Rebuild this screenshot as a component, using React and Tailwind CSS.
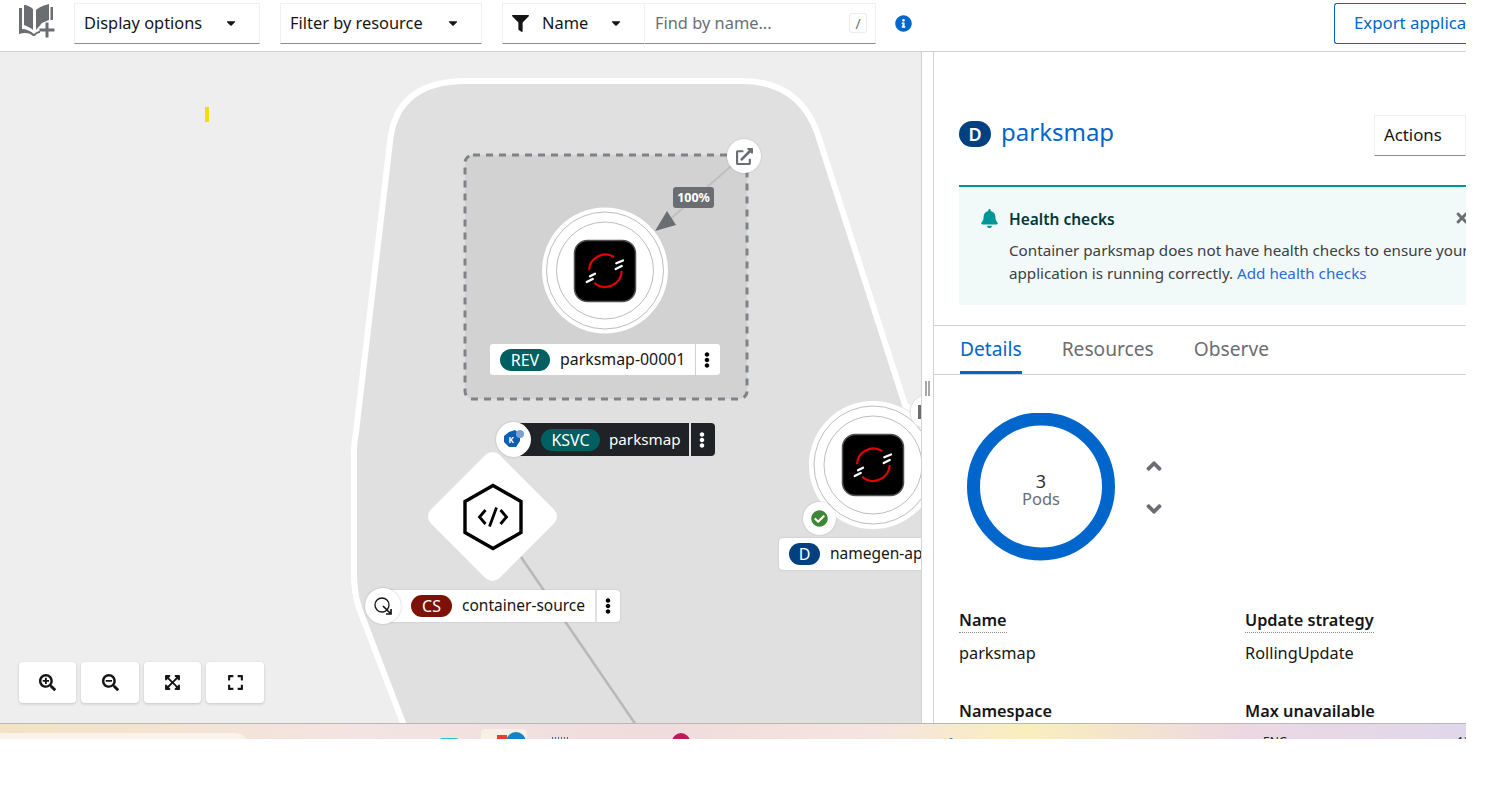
import React from "react";
import {
  FaCaretDown, FaFilter, FaInfoCircle, FaSearchPlus, FaSearchMinus, FaExpandArrowsAlt, FaExpand,
  FaExternalLinkAlt, FaEllipsisV, FaBell, FaTimes, FaAngleUp, FaAngleDown, FaCheckCircle,
} from "react-icons/fa";

function Select({ label, className }) {
  return (
    <div className={"flex h-[41px] items-center justify-between border border-[#f0f0f0] border-b-[#8a8d90] pl-[9px] pr-[21px] text-[16.4px] text-[#151515] " + className}>
      <span>{label}</span>
      <FaCaretDown className="h-[14px] w-[14px] text-[#151515]" />
    </div>
  );
}

function BookIcon() {
  return (
    <svg width="46" height="40" viewBox="14 3 46 40" className="ml-[14px] mr-[14px] shrink-0">
      <path d="M24 5 C27 5 31 7 33 9 V30 C31 28 27 26 24 25 Z" fill="#6a6e73" />
      <path d="M36 10 C39 7 45 5 49 4 V20 L42 23 L36 30 Z" fill="#6a6e73" />
      <path d="M19 8 H22 V29 C26 29 31 31 34 34 C36 32 38 31 40 31 V33 C38 33 36 34 35 36 H33 C30 33 25 32 19 34 Z" fill="#6a6e73" />
      <path d="M50.5 7 H53 V20 H50.5 Z" fill="#6a6e73" />
      <path d="M45.5 22.5 H48.5 V28.5 H54.5 V31.5 H48.5 V37.5 H45.5 V31.5 H39.5 V28.5 H45.5 Z" fill="#6a6e73" />
    </svg>
  );
}

function OpenShiftLogo({ x, y }) {
  return (
    <svg width="64" height="64" viewBox="0 0 64 64" className="absolute" style={{ left: x, top: y }}>
      <rect x="1.5" y="1.5" width="61" height="61" rx="13" fill="#000" stroke="#4f5255" strokeWidth="1.5" />
      <path d="M16 31.3 A16.5 16.5 0 0 1 41 18" fill="none" stroke="#e60000" strokeWidth="2.2" />
      <path d="M48.7 32 A16.5 16.5 0 0 1 21.3 43.7" fill="none" stroke="#e60000" strokeWidth="2.2" />
      <path d="M43.3 24.3 L50 21.5 M42.7 30 L48.7 27 M17 37.3 L22 34.7 M13.7 43 L19.7 40" stroke="#fff" strokeWidth="2.3" strokeLinecap="round" />
    </svg>
  );
}

function Badge({ children, color, className }) {
  return (
    <span className={"flex h-[22px] items-center justify-center rounded-full text-[16px] text-white " + className} style={{ backgroundColor: color }}>
      {children}
    </span>
  );
}

function Kebab({ className }) {
  return <FaEllipsisV className={"h-[16px] w-[16px] " + className} />;
}

function ZoomBtn({ children, className }) {
  return (
    <button className={"flex h-[41px] items-center justify-center rounded-[4px] bg-white text-[#151515] shadow-[0_1px_3px_rgba(0,0,0,0.18)] " + className}>
      {children}
    </button>
  );
}

function Graph() {
  return (
    <div className="relative h-full w-[921px] shrink-0 overflow-hidden bg-[#eeeeee]">
      <svg width="1000" height="700" viewBox="0 52 1000 700" className="absolute left-0 top-0">
        <path
          d="M409.5 740 L359 608 Q354 592 354 575 L354 452 Q354 442 356 432 L390 142 Q396 81 466 81 L742 81 Q798 81 817 132 L905 405 L960 440 L960 740 Z"
          fill="#e0e0e0"
          stroke="#ffffff"
          strokeWidth="6"
        />
        <rect x="465" y="155" width="282" height="244" rx="8" fill="#d2d2d2" stroke="#7f8287" strokeWidth="3" strokeDasharray="7 6" />
        <line x1="744" y1="155" x2="660" y2="228" stroke="#bfbfbf" strokeWidth="2" />
        <path d="M655 231 L667 211 L676 225 Z" fill="#6a6e73" />
        <circle cx="605" cy="270.5" r="63" fill="#fff" />
        <circle cx="605" cy="270.5" r="58.5" fill="none" stroke="#bdbdbd" />
        <circle cx="605" cy="270.5" r="48.5" fill="none" stroke="#bdbdbd" />
        <line x1="521" y1="557" x2="636" y2="725" stroke="#b8b8b8" strokeWidth="2.5" />
        <circle cx="873" cy="465" r="64" fill="#fff" />
        <circle cx="873" cy="465" r="59" fill="none" stroke="#bdbdbd" />
        <circle cx="873" cy="465" r="49" fill="none" stroke="#bdbdbd" />
        <circle cx="927" cy="412" r="17" fill="#fff" stroke="#dddddd" />
        <rect x="918" y="405" width="5" height="14" fill="#6a6e73" />
        <rect x="205" y="107" width="4" height="15" fill="#f0e000" />
        <rect x="444" y="468" width="97" height="97" rx="10" transform="rotate(45 492.5 516.5)" fill="#fff" />
        <path d="M493 485.5 L521 501.5 L521 532.5 L493 548.5 L465 532.5 L465 501.5 Z" fill="none" stroke="#000" strokeWidth="3.4" />
        <path d="M485.5 510 L479.5 517 L485.5 524 M500.5 510 L506.5 517 L500.5 524 M496.5 507.5 L489.5 526.5" fill="none" stroke="#000" strokeWidth="2.8" />
      </svg>

      <OpenShiftLogo x={573} y={187} />
      <OpenShiftLogo x={841} y={381} />

      <div className="absolute left-[727px] top-[87px] flex h-[34px] w-[34px] items-center justify-center rounded-full bg-white shadow-[0_0_2px_rgba(0,0,0,0.2)]">
        <FaExternalLinkAlt className="h-[17px] w-[17px] text-[#6a6e73]" />
      </div>
      <div className="absolute left-[673px] top-[135px] flex h-[21px] w-[41px] items-center justify-center rounded-[3px] bg-[#6a6e73] pt-[1px] text-[12.5px] font-bold text-white">
        100%
      </div>

      <div className="absolute left-[490px] top-[292px] flex h-[31px] w-[230px] items-center rounded-[3px] bg-white text-[#151515]">
        <Badge color="#005f60" className="ml-[10px] w-[50px]">REV</Badge>
        <span className="ml-[10px] w-[135px] text-[15.9px]">parksmap-00001</span>
        <span className="flex h-full flex-1 items-center justify-center border-l border-[#d2d2d2] pr-[2px]">
          <Kebab className="text-black" />
        </span>
      </div>

      <div className="absolute left-[515px] top-[371px] flex h-[33px] w-[200px] items-center rounded-[4px] bg-[#1f2327] text-white">
        <Badge color="#005f60" className="ml-[26px] w-[59px]">KSVC</Badge>
        <span className="ml-[9px] w-[80px] text-[15.2px]">parksmap</span>
        <span className="flex h-full flex-1 items-center justify-center border-l-2 border-[#e0e0e0] pr-[2px]">
          <Kebab className="text-white" />
        </span>
      </div>
      <div className="absolute left-[496px] top-[370px] flex h-[35px] w-[35px] items-center justify-center rounded-full bg-white shadow-[0_0_2px_rgba(0,0,0,0.25)]">
        <svg width="22" height="20" viewBox="0 0 22 20">
          <path d="M6 2 L12 0 L17 4 L17 11 L13 17 L6 17 L1 12 L1 6 Z" fill="#0a5fb0" />
          <text x="5.5" y="13" fontSize="8" fontWeight="700" fill="#fff" fontFamily="Noto Sans, sans-serif">K</text>
          <circle cx="17" cy="4" r="4" fill="#7a9ed6" />
        </svg>
      </div>

      <div className="absolute left-[385px] top-[538px] flex h-[32px] w-[235px] items-center rounded-[4px] bg-white text-[#151515] shadow-[0_0_2px_rgba(0,0,0,0.18)]">
        <Badge color="#7d1007" className="ml-[26px] w-[41px]">CS</Badge>
        <span className="ml-[10px] w-[133px] whitespace-nowrap text-[15.5px]">container-source</span>
        <span className="flex h-full flex-1 items-center justify-center border-l-2 border-[#e0e0e0] pr-[2px]">
          <Kebab className="text-black" />
        </span>
      </div>
      <div className="absolute left-[365px] top-[536px] flex h-[36px] w-[36px] items-center justify-center rounded-full bg-white shadow-[0_0_2px_rgba(0,0,0,0.25)]">
        <svg width="20" height="20" viewBox="0 0 20 20">
          <circle cx="9" cy="9" r="7" fill="none" stroke="#151515" strokeWidth="1.3" />
          <path d="M10 10 L17 17 M13 18 L18 18 L18 13" fill="none" stroke="#151515" strokeWidth="1.7" />
        </svg>
      </div>

      <div className="absolute left-[803px] top-[450px] flex h-[33px] w-[33px] items-center justify-center rounded-full bg-white shadow-[0_0_2px_rgba(0,0,0,0.2)]">
        <FaCheckCircle className="h-[17px] w-[17px] text-[#3e8635]" />
      </div>
      <div className="absolute left-[779px] top-[486px] flex h-[32px] w-[160px] items-center rounded-[4px] bg-white text-[#151515] shadow-[0_0_2px_rgba(0,0,0,0.18)]">
        <Badge color="#004080" className="ml-[10px] w-[31px]">D</Badge>
        <span className="ml-[10px] text-[15.5px]">namegen-app</span>
      </div>

      <div className="absolute bottom-[20px] left-[19px] flex gap-[5px]">
        <ZoomBtn className="w-[57px]"><FaSearchPlus className="h-[17px] w-[17px]" /></ZoomBtn>
        <ZoomBtn className="w-[58px]"><FaSearchMinus className="h-[17px] w-[17px]" /></ZoomBtn>
        <ZoomBtn className="w-[57px]"><FaExpandArrowsAlt className="h-[17px] w-[17px]" /></ZoomBtn>
        <ZoomBtn className="w-[58px]"><FaExpand className="h-[17px] w-[17px]" /></ZoomBtn>
      </div>
    </div>
  );
}

function Field({ label, value, dotted, className }) {
  return (
    <div className={className}>
      <div className={"inline-block h-[23px] text-[16.3px] font-semibold leading-[21px] text-[#151515] " + (dotted ? "border-b border-dotted border-[#8a8d90]" : "")}>
        {label}
      </div>
      <div className="mt-[8px] h-[24px] text-[16.3px] leading-[24px] text-[#151515]">{value}</div>
    </div>
  );
}

function Panel() {
  return (
    <div className="min-w-0 flex-1 overflow-hidden bg-white">
      <div className="flex h-[133px] items-start pl-[25px]">
        <span className="mt-[69px] flex h-[26px] w-[32px] items-center justify-center rounded-full bg-[#004080] text-[18px] font-semibold text-white">D</span>
        <span className="ml-[10px] mt-[61px] text-[24px] leading-[38px] text-[#0066cc]">parksmap</span>
        <div className="ml-auto mt-[63px] flex h-[41px] w-[92px] items-center border border-[#f0f0f0] border-b-[#8a8d90] pb-[1px] pl-[9px] text-[16.8px] text-[#151515]">
          Actions
        </div>
      </div>
      <div className="ml-[25px] h-[120px] w-[560px] border-t-2 border-[#009596] bg-[#f2f9f9]">
        <div className="relative pl-[50px] pt-[20px]">
          <FaBell className="absolute left-[21px] top-[22px] h-[19px] w-[19px] text-[#009596]" />
          <div className="text-[15.5px] font-semibold leading-[24px] text-[#003737]">Health checks</div>
          <div className="mt-[8px] text-[15.2px] leading-[23px] text-[#3c3f42]">
            <div className="whitespace-nowrap">Container parksmap does not have health checks to ensure your</div>
            <div className="whitespace-nowrap">
              application is running correctly. <span className="text-[#2b6cd6]">Add health checks</span>
            </div>
          </div>
          <FaTimes className="absolute left-[495px] top-[23px] h-[16px] w-[16px] text-[#6a6e73]" />
        </div>
      </div>
      <div className="mt-[20px] flex h-[50px] items-stretch gap-[40px] border-y border-[#d2d2d2] pl-[26px] text-[19.2px]">
        <div className="flex items-center border-b-[3px] border-[#0066cc] pt-[1px] text-[#0066cc]">Details</div>
        <div className="flex items-center pb-[2px] text-[#6a6e73]">Resources</div>
        <div className="flex items-center pb-[2px] text-[#6a6e73]">Observe</div>
      </div>
      <div className="flex items-center pl-[33px] pt-[38px]">
        <div className="relative h-[148px] w-[148px]">
          <svg width="148" height="148" viewBox="0 0 148 148">
            <circle cx="74" cy="73.5" r="67.5" fill="none" stroke="#0066cc" strokeWidth="13" />
          </svg>
          <div className="absolute inset-0 flex flex-col items-center justify-center pt-[6px] leading-[18px]">
            <span className="text-[18px] text-[#303030]">3</span>
            <span className="text-[16.5px] text-[#6a6e73]">Pods</span>
          </div>
        </div>
        <div className="ml-[27px] flex flex-col items-center gap-[19px] text-[#6a6e73]">
          <FaAngleUp className="h-[24px] w-[24px]" />
          <FaAngleDown className="h-[24px] w-[24px]" />
        </div>
      </div>
      <div className="mt-[47px] grid grid-cols-[286px_1fr] pl-[25px]">
        <Field label="Name" value="parksmap" dotted className="h-[91px]" />
        <Field label="Update strategy" value="RollingUpdate" dotted className="h-[91px]" />
        <Field label="Namespace" value="" />
        <Field label="Max unavailable" value="" />
      </div>
    </div>
  );
}

function Taskbar() {
  return (
    <div className="relative h-[16px] shrink-0 overflow-hidden border-t border-[#bdb7b4] bg-[linear-gradient(90deg,#f3e3c4_0%,#f3e4e4_25%,#efdcdc_45%,#f5e5e2_60%,#f8efbc_70%,#ecd8e4_85%,#dfd8ea_100%)]">
      <div className="absolute left-[-20px] top-[9px] h-[30px] w-[269px] rounded-[14px] bg-[#f9f3ec]" />
      <div className="absolute left-[481px] top-[5px] h-[30px] w-[46px] rounded-[4px] bg-[#f8f0e4]" />
      <div className="absolute left-[497px] top-[11px] h-[10px] w-[10px] bg-[#e63c2e]" />
      <div className="absolute left-[506px] top-[8px] h-[20px] w-[20px] rounded-full bg-[#1383c9]" />
      <div className="absolute left-[672px] top-[9px] h-[20px] w-[18px] rounded-full bg-[#c2185b]" />
      <div className="absolute left-[440px] top-[14px] h-[4px] w-[18px] rounded-full bg-[#21c3d6]" />
      <div className="absolute left-[552px] top-[13px] h-[4px] w-[18px] bg-[repeating-linear-gradient(90deg,#2f6d9e_0,#2f6d9e_1px,transparent_1px,transparent_3px)]" />
      <div className="absolute left-[949px] top-[14px] h-[4px] w-[4px] rounded-full bg-[#1383c9]" />
      <span className="absolute left-[1263px] top-[10px] text-[12px] leading-[16px] text-[#222]">ENG</span>
      <span className="absolute left-[1457px] top-[10px] text-[12px] leading-[16px] text-[#222]">12</span>
    </div>
  );
}

export default function App() {
  return (
    <div className="flex h-[739px] w-[1466px] flex-col overflow-hidden bg-white font-['Noto_Sans',sans-serif]">
      <div className="flex h-[52px] shrink-0 items-center border-b border-[#d2d2d2] pb-[5px]">
        <BookIcon />
        <Select label="Display options" className="w-[186px]" />
        <Select label="Filter by resource" className="ml-[20px] w-[202px]" />
        <div className="ml-[20px] flex h-[41px] w-[143px] items-center border border-[#f0f0f0] border-b-[#8a8d90] pl-[9px] pr-[21px] text-[16.4px] text-[#151515]">
          <FaFilter className="h-[17px] w-[17px]" />
          <span className="ml-[13px]">Name</span>
          <FaCaretDown className="ml-auto h-[14px] w-[14px]" />
        </div>
        <div className="flex h-[41px] w-[231px] items-center justify-between border border-l-0 border-[#f0f0f0] border-b-[#8a8d90] pl-[10px] pr-[8px] text-[16.4px] text-[#6a6e73]">
          <span>Find by name...</span>
          <span className="flex h-[20px] w-[18px] items-center justify-center rounded-[3px] border border-[#ececec] text-[14px]">/</span>
        </div>
        <FaInfoCircle className="ml-[19px] h-[17px] w-[17px] text-[#0066cc]" />
        <div className="ml-auto flex h-[41px] w-[132px] items-center overflow-hidden whitespace-nowrap rounded-l-[3px] border border-r-0 border-[#0066cc] pl-[19px] text-[16.8px] text-[#0066cc]">
          Export application
        </div>
      </div>
      <div className="flex min-h-0 flex-1">
        <Graph />
        <div className="relative w-[13px] shrink-0 border-x border-[#d2d2d2] bg-white">
          <div className="absolute left-[3px] top-[329px] h-[15px] w-[5px] border-x-2 border-[#a8a8a8]" />
        </div>
        <Panel />
      </div>
      <Taskbar />
    </div>
  );
}
